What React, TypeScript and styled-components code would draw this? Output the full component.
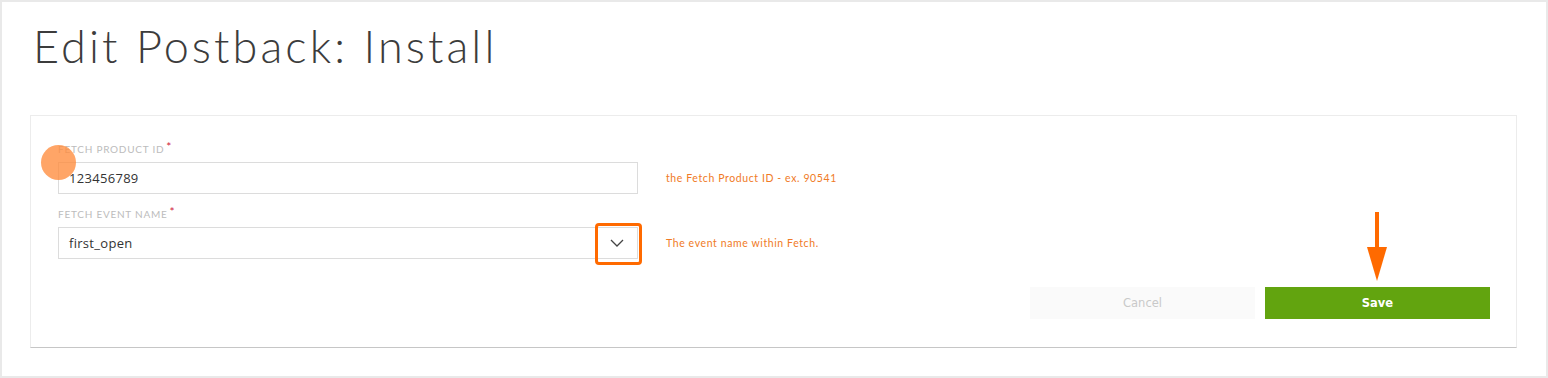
import React from 'react'
import styled, { createGlobalStyle } from 'styled-components'

const GlobalStyle = createGlobalStyle`
  html, body {
    margin: 0;
    padding: 0;
    background: #e9e9e9;
  }
  body {
    font-family: Lato, 'Open Sans', sans-serif;
  }
`

const Page = styled.div`
  padding: 2px;
  height: 378px;
  box-sizing: border-box;
`

const Panel = styled.div`
  background: #fff;
  height: 100%;
  box-sizing: border-box;
  padding: 0 29px 0 28px;
  display: flex;
  flex-direction: column;
`

const Title = styled.h1`
  margin: 0;
  padding: 16px 0 0 3px;
  height: 94px;
  box-sizing: border-box;
  font-family: Lato, sans-serif;
  font-weight: 300;
  font-size: 45px;
  line-height: 56px;
  letter-spacing: 3.1px;
  color: #3c3c3c;
`

const Card = styled.div`
  position: relative;
  margin-top: 19px;
  height: 233px;
  box-sizing: border-box;
  border: 1px solid #ececec;
  border-bottom: 1px solid #c6c6c6;
  padding: 26px 26px 0 27px;
`

const Row = styled.div`
  display: grid;
  grid-template-columns: 580px 1fr;
  column-gap: 28px;
  align-items: end;
  margin-bottom: 13px;
`

const Field = styled.div`
  display: flex;
  flex-direction: column;
`

const Label = styled.label`
  font-size: 10px;
  letter-spacing: 0.75px;
  text-transform: uppercase;
  color: #bcbcbc;
  height: 20px;
  line-height: 14px;
  display: flex;
  align-items: flex-start;
`

const Required = styled.span`
  color: #d0243b;
  font-size: 12px;
  margin-left: 2px;
  line-height: 10px;
`

const Input = styled.div`
  height: 32px;
  box-sizing: border-box;
  border: 1px solid #dcdcdc;
  padding: 0 10px;
  display: flex;
  align-items: center;
  font-size: 13px;
  letter-spacing: 0.3px;
  color: #333;
  font-family: 'Open Sans', Lato, sans-serif;
`

const SelectBox = styled(Input)`
  position: relative;
  padding-right: 0;
  justify-content: space-between;
`

const Chevron = styled.span`
  width: 40px;
  height: 100%;
  display: flex;
  align-items: center;
  justify-content: center;
  border-left: 1px solid #dcdcdc;
  color: #444;
`

const Highlight = styled.span`
  position: absolute;
  right: -5px;
  top: -5px;
  width: 47px;
  height: 42px;
  box-sizing: border-box;
  border: 3px solid #ff6a00;
  border-radius: 4px;
`

const Help = styled.div`
  font-size: 10.5px;
  color: #f07a26;
  letter-spacing: 0.6px;
  height: 32px;
  display: flex;
  align-items: center;
`

const Actions = styled.div`
  position: relative;
  display: flex;
  justify-content: flex-end;
  gap: 10px;
  margin-top: 28px;
`

const Button = styled.button<{ $primary?: boolean }>`
  width: 225px;
  height: 32px;
  border: none;
  font-family: 'DejaVu Sans', Verdana, sans-serif;
  font-size: 11.5px;
  font-weight: ${(p) => (p.$primary ? 600 : 400)};
  background: ${(p) => (p.$primary ? '#62a40f' : '#fafafa')};
  color: ${(p) => (p.$primary ? '#fff' : '#c9c9c9')};
`

const Arrow = styled.svg`
  position: absolute;
  right: 102px;
  bottom: 37px;
`

const Dot = styled.span`
  position: absolute;
  left: 10px;
  top: 29px;
  width: 35px;
  height: 35px;
  border-radius: 50%;
  background: rgba(255, 140, 60, 0.78);
`

export default function App() {
  return (
    <>
      <GlobalStyle />
      <Page>
        <Panel>
          <Title>Edit Postback: Install</Title>
          <Card>
            <Row>
              <Field>
                <Label>
                  Fetch Product ID<Required>*</Required>
                </Label>
                <Input>123456789</Input>
              </Field>
              <Help>the Fetch Product ID - ex. 90541</Help>
            </Row>
            <Row>
              <Field>
                <Label>
                  Fetch Event Name<Required>*</Required>
                </Label>
                <SelectBox>
                  first_open
                  <Chevron>
                    <svg width="14" height="8" viewBox="0 0 14 8" fill="none">
                      <path d="M1 1l6 6 6-6" stroke="#444" strokeWidth="1.3" />
                    </svg>
                  </Chevron>
                  <Highlight />
                </SelectBox>
              </Field>
              <Help>The event name within Fetch.</Help>
            </Row>
            <Actions>
              <Button>Cancel</Button>
              <Button $primary>Save</Button>
              <Arrow width="22" height="70" viewBox="0 0 22 70">
                <rect x="9" y="0" width="4" height="38" fill="#ff6a00" />
                <polygon points="1,35 21,35 11,69" fill="#ff6a00" />
              </Arrow>
            </Actions>
            <Dot />
          </Card>
        </Panel>
      </Page>
    </>
  )
}
